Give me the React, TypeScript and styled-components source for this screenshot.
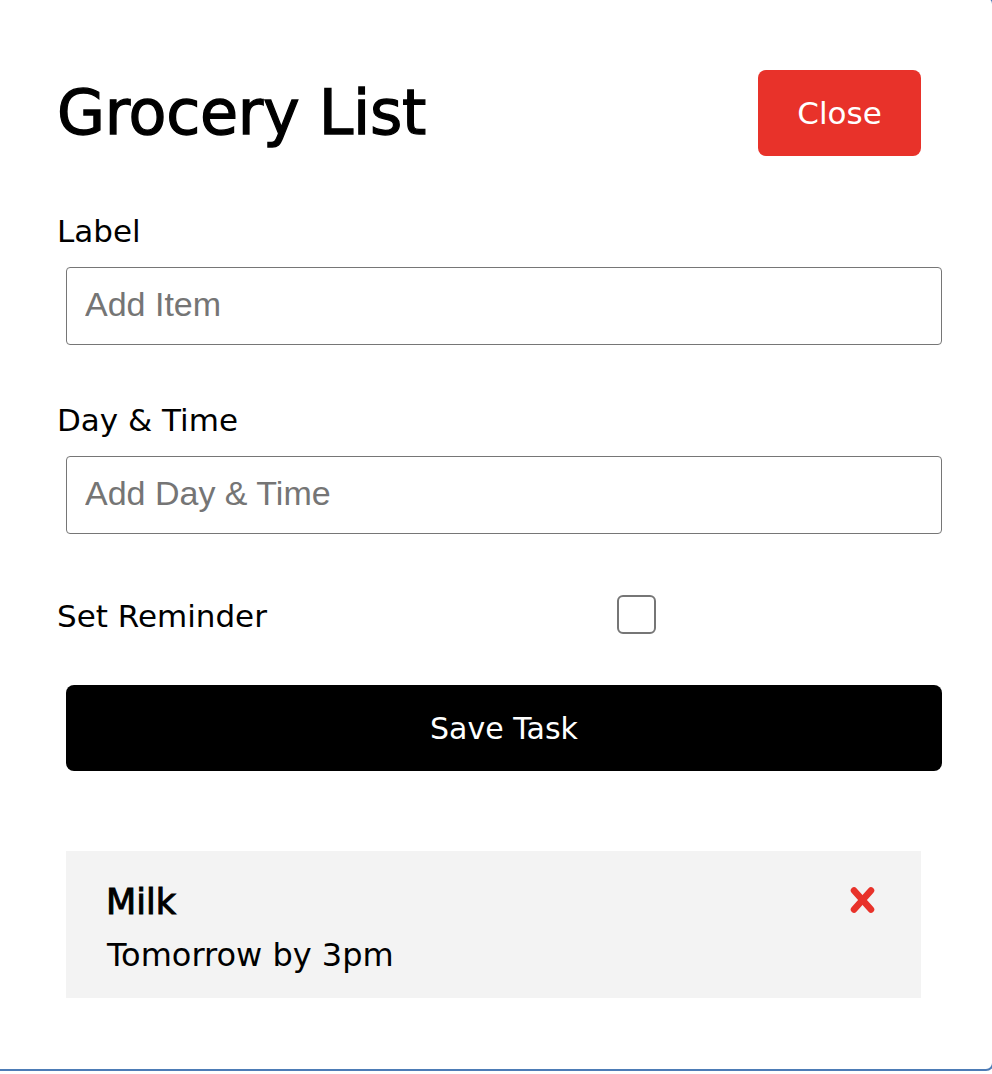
import React from "react";
import styled, { createGlobalStyle } from "styled-components";

const GlobalStyle = createGlobalStyle`
  html, body {
    margin: 0;
    padding: 0;
    background: #ffffff;
    overflow: hidden;
  }
  body {
    font-family: "DejaVu Sans", "Liberation Sans", sans-serif;
    color: #000000;
  }
  #root {
    display: flow-root;
  }
`;

const Modal = styled.div`
  box-sizing: border-box;
  width: 1004px;
  height: 1075px;
  margin: -4px 0 0 -10px;
  border: 2px solid #4d7cb6;
  border-radius: 8px;
  background: #ffffff;
  padding: 72px 0 0 65px;
`;

const Header = styled.div`
  display: flex;
  justify-content: space-between;
  align-items: center;
  width: 864px;
`;

const Title = styled.h1`
  margin: 0;
  font-size: 62px;
  font-weight: 400;
  line-height: 72px;
  letter-spacing: -0.3px;
  -webkit-text-stroke: 1.3px #000;
`;

const CloseButton = styled.button`
  width: 163px;
  height: 86px;
  border: none;
  border-radius: 8px;
  background: #e8322a;
  color: #ffffff;
  font-family: "DejaVu Sans", sans-serif;
  font-size: 31px;
  cursor: pointer;
  padding: 0;
`;

const FieldLabel = styled.label`
  display: block;
  margin: 58px 0 18px;
  font-size: 31px;
  line-height: 35px;
`;

const TextInput = styled.input`
  display: block;
  box-sizing: border-box;
  margin: 0 0 0 9px;
  width: 876px;
  height: 78px;
  border: 1px solid #767676;
  border-radius: 4px;
  padding: 0 18px 4px;
  font-family: "Liberation Sans", Arial, sans-serif;
  font-size: 34px;
  color: #000;
  background: #fff;
  outline: none;
  &::placeholder {
    color: #757575;
    opacity: 1;
  }
`;

const ReminderRow = styled.div`
  display: flex;
  align-items: center;
  height: 39px;
  margin-top: 61px;
`;

const ReminderLabel = styled.label`
  width: 560px;
  margin-top: 4px;
  font-size: 31px;
  line-height: 35px;
`;

const Checkbox = styled.input`
  appearance: none;
  -webkit-appearance: none;
  box-sizing: border-box;
  margin: 0;
  width: 39px;
  height: 39px;
  border: 2px solid #767676;
  border-radius: 6px;
  background: #fff;
`;

const SaveButton = styled.button`
  display: block;
  margin: 51px 0 0 9px;
  width: 876px;
  height: 86px;
  border: none;
  border-radius: 8px;
  background: #000000;
  color: #ffffff;
  font-family: "DejaVu Sans", sans-serif;
  font-size: 30px;
  padding: 0;
  cursor: pointer;
`;

const TaskCard = styled.div`
  box-sizing: border-box;
  display: flex;
  justify-content: space-between;
  align-items: flex-start;
  margin: 80px 0 0 9px;
  width: 855px;
  height: 147px;
  padding: 31px 46px 0 40px;
  background: #f3f3f3;
`;

const TaskText = styled.div`
  display: flex;
  flex-direction: column;
`;

const TaskTitle = styled.div`
  font-size: 35px;
  line-height: 41px;
  -webkit-text-stroke: 1px #000;
`;

const TaskTime = styled.div`
  margin-top: 14px;
  margin-left: 1px;
  font-size: 32px;
  line-height: 37px;
`;

const DeleteIcon = styled.svg`
  display: block;
  margin-top: 4px;
  cursor: pointer;
`;

export default function App() {
  return (
    <>
      <GlobalStyle />
      <Modal>
        <Header>
          <Title>Grocery List</Title>
          <CloseButton>Close</CloseButton>
        </Header>

        <FieldLabel>Label</FieldLabel>
        <TextInput type="text" placeholder="Add Item" />

        <FieldLabel>Day &amp; Time</FieldLabel>
        <TextInput type="text" placeholder="Add Day & Time" />

        <ReminderRow>
          <ReminderLabel>Set Reminder</ReminderLabel>
          <Checkbox type="checkbox" />
        </ReminderRow>

        <SaveButton>Save Task</SaveButton>

        <TaskCard>
          <TaskText>
            <TaskTitle>Milk</TaskTitle>
            <TaskTime>Tomorrow by 3pm</TaskTime>
          </TaskText>
          <DeleteIcon width="25" height="28" viewBox="0 0 25 28">
            <g stroke="#e8322a" strokeWidth="6.5" strokeLinecap="round">
              <line x1="4" y1="4.5" x2="21" y2="23.5" />
              <line x1="21" y1="4.5" x2="4" y2="23.5" />
            </g>
          </DeleteIcon>
        </TaskCard>
      </Modal>
    </>
  );
}
